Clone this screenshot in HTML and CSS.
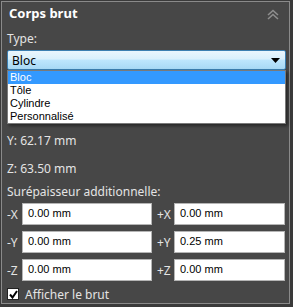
FILE: index.html
```
<!DOCTYPE html>
<html lang="fr">
  <head>
    <meta charset="UTF-8" />
    <title>Corps brut</title>
    <link rel="stylesheet" href="styles.css">
  </head>
  <body>
    <div class="panel">
      <div class="header">
        <span class="title">Corps brut</span>
        <svg class="collapse" width="14" height="11" viewBox="0 0 14 11">
          <polyline points="2,6 7,1.5 12,6" fill="none" stroke="#8e8e8e" stroke-width="1.6" />
          <polyline points="2,10 7,5.5 12,10" fill="none" stroke="#8e8e8e" stroke-width="1.6" />
        </svg>
      </div>

      <div class="label type-label">Type:</div>
      <div class="combo">
        <div class="select">
          <span>Bloc</span>
          <svg class="arrow" width="9" height="5" viewBox="0 0 9 5">
            <polygon points="0,0 9,0 4.5,5" fill="#000" />
          </svg>
        </div>
        <ul class="dropdown">
          <li class="selected">Bloc</li>
          <li>Tôle</li>
          <li>Cylindre</li>
          <li>Personnalisé</li>
        </ul>
      </div>

      <!-- X row sits under the open list -->
      <div class="label dim first"></div>
      <div class="label dim">Y: 62.17 mm</div>
      <div class="label dim">Z: 63.50 mm</div>

      <div class="label extra">Surépaisseur additionnelle:</div>
      <div class="offsets">
        <span class="axis">-X</span>
        <div class="field">0.00 mm</div>
        <span class="axis plus">+X</span>
        <div class="field">0.00 mm</div>

        <span class="axis">-Y</span>
        <div class="field">0.00 mm</div>
        <span class="axis plus">+Y</span>
        <div class="field">0.25 mm</div>

        <span class="axis">-Z</span>
        <div class="field">0.00 mm</div>
        <span class="axis plus">+Z</span>
        <div class="field">0.00 mm</div>
      </div>

      <label class="check">
        <span class="box">
          <svg width="9" height="9" viewBox="0 0 9 9">
            <polyline points="1,4.5 3.5,7.5 8,1" fill="none" stroke="#000" stroke-width="2" />
          </svg>
        </span>
        Afficher le brut
      </label>
    </div>
  </body>
</html>
```

FILE: styles.css
```
body {
  margin: 0;
  background: #3a3a3a;
  font-family: "Noto Sans", "Open Sans", sans-serif;
  font-size: 12px;
  color: #e4e4e4;
}
.panel {
  margin: 1px 3px 1px 1px;
  height: 303px;
  box-sizing: border-box;
  border: 1px solid #8a8a8a;
  background: #474747;
  padding: 0 3px 0 5px;
  position: relative;
}
.header {
  height: 22px;
  display: flex;
  align-items: center;
  justify-content: space-between;
  padding-left: 2px;
}
.title {
  font-weight: bold;
  font-size: 13px;
  color: #ffffff;
}
.collapse {
  margin-right: 6px;
  margin-top: 2px;
}
.label {
  height: 18px;
  line-height: 18px;
}
.type-label {
  margin-top: 6px;
}
.combo {
  position: relative;
  margin-top: 2px;
}
.select {
  height: 20px;
  box-sizing: border-box;
  border: 1px solid #3c7fb1;
  border-radius: 2px;
  background: linear-gradient(#eaf6fd, #d9f0fc 45%, #bee6fd 50%, #a7d9f5);
  color: #000;
  display: flex;
  align-items: center;
  justify-content: space-between;
  padding: 0 5px 0 4px;
}
.dropdown {
  position: absolute;
  top: 20px;
  left: 0;
  right: 0;
  margin: 0;
  padding: 0;
  list-style: none;
  background: #fff;
  border: 1px solid #7a7a7a;
  color: #000;
  font-family: "Liberation Sans", Arial, sans-serif;
  font-size: 11px;
  box-shadow: 2px 2px 3px rgba(0, 0, 0, 0.45);
  z-index: 10;
}
.dropdown li {
  height: 13px;
  line-height: 13px;
  padding-left: 2px;
}
.dropdown li.selected {
  background: #3399ff;
  color: #fff;
}
.dim {
  height: 28px;
  line-height: 28px;
}
.first {
  margin-top: 29px;
}
.extra {
  margin-top: 0;
}
.offsets {
  margin-top: 2px;
  display: grid;
  grid-template-columns: 15px 130px 22px 111px;
  grid-auto-rows: 22px;
  row-gap: 6px;
}
.axis {
  line-height: 24px;
  font-size: 12px;
}
.axis.plus {
  padding-left: 5px;
}
.field {
  background: #fff;
  border: 1px solid #b5b5b5;
  box-sizing: border-box;
  font-family: "Liberation Sans", Arial, sans-serif;
  font-size: 11px;
  color: #000;
  padding-left: 5px;
  line-height: 18px;
}
.check {
  margin-top: 6px;
  display: flex;
  align-items: center;
  gap: 6px;
  height: 14px;
}
.box {
  width: 12px;
  height: 12px;
  box-sizing: border-box;
  background: #fff;
  border: 1px solid #222;
  display: flex;
  align-items: center;
  justify-content: center;
}
```
